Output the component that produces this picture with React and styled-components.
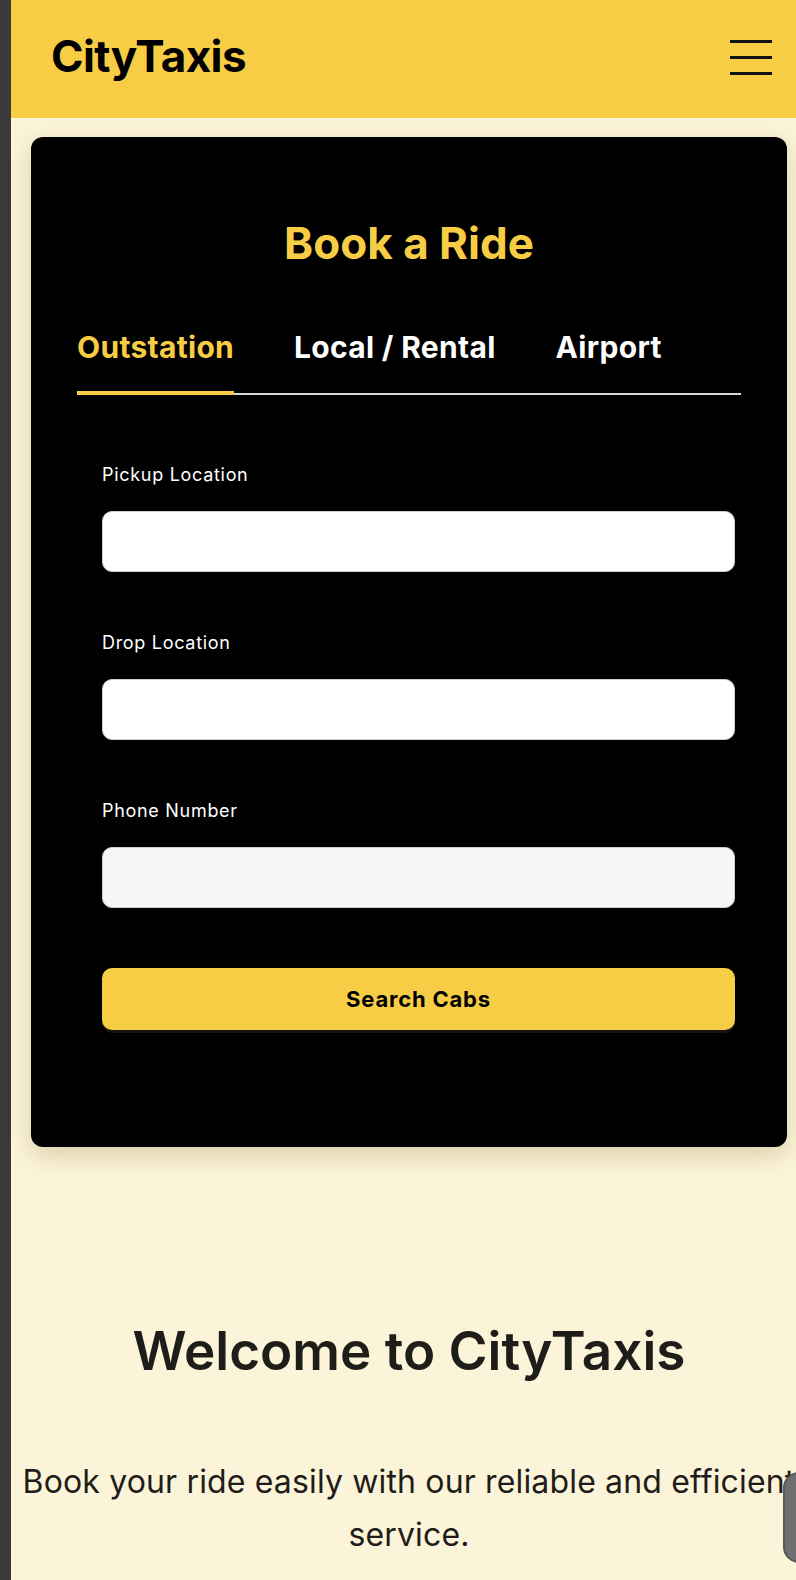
import styled, { createGlobalStyle } from 'styled-components'

const yellow = '#f8cd46'
const cream = '#fcf4d9'

const GlobalStyle = createGlobalStyle`
  html, body {
    margin: 0;
    padding: 0;
    background: ${cream};
    overflow: hidden;
  }
  * {
    box-sizing: border-box;
  }
`

const Frame = styled.div`
  display: flex;
  width: 796px;
  min-height: 1580px;
  position: relative;
  font-family: Inter, 'Noto Sans', sans-serif;
`

const Strip = styled.div`
  flex: 0 0 11px;
  background: #3a3a3a;
`

const Page = styled.div`
  flex: 0 0 796px;
  background: ${cream};
`

const Header = styled.header`
  height: 118px;
  background: ${yellow};
  display: flex;
  align-items: center;
  justify-content: space-between;
  padding: 0 35px 0 40px;
`

const Logo = styled.div`
  font-size: 44px;
  line-height: 52px;
  font-weight: 700;
  color: #000;
  letter-spacing: -0.6px;
  margin-bottom: 6px;
`

const Burger = styled.button`
  width: 42px;
  height: 35px;
  border: 0;
  padding: 0;
  background: none;
  display: flex;
  flex-direction: column;
  justify-content: space-between;
  margin-bottom: 4px;

  span {
    display: block;
    height: 3px;
    background: #111;
  }
`

const Card = styled.section`
  margin: 19px 20px 0;
  background: #000;
  border-radius: 12px;
  padding: 80px 46px 117px;
  box-shadow: 0 8px 24px rgba(120, 100, 40, 0.25);
`

const Title = styled.h2`
  margin: 0;
  text-align: center;
  color: ${yellow};
  font-size: 44px;
  line-height: 52px;
  font-weight: 700;
`

const Tabs = styled.div`
  display: flex;
  gap: 60px;
  margin-top: 60px;
  border-bottom: 2px solid #d8d8d8;
`

const Tab = styled.div`
  font-size: 30px;
  line-height: 36px;
  font-weight: 700;
  letter-spacing: 0.3px;
  padding-bottom: 26px;
  color: ${(p) => (p.$active ? yellow : '#fff')};
  border-bottom: 4px solid ${(p) => (p.$active ? yellow : 'transparent')};
  margin-bottom: -2px;
`

const Form = styled.form`
  padding: 69px 6px 0 25px;
`

const Field = styled.div`
  margin-bottom: 60px;
`

const Label = styled.label`
  display: block;
  color: #fff;
  font-size: 18px;
  line-height: 22px;
  margin-bottom: 25px;
  letter-spacing: 0.7px;
`

const Input = styled.input`
  display: block;
  width: 100%;
  height: 61px;
  border-radius: 10px;
  border: 1px solid #cfcfcf;
  background: ${(p) => (p.$muted ? '#f6f6f6' : '#fff')};
  font-size: 18px;
  padding: 0 14px;
`

const Button = styled.button`
  display: block;
  width: 100%;
  height: 62px;
  margin-top: 4px;
  border: 0;
  border-radius: 10px;
  background: ${yellow};
  color: #000;
  font-family: inherit;
  font-size: 22px;
  font-weight: 700;
  letter-spacing: 0.8px;
  box-shadow: 0 3px 0 #15140f;
`

const Welcome = styled.section`
  padding: 171px 0 0;
  text-align: center;
  color: #1f1d1a;
`

const Heading = styled.h1`
  margin: 0;
  font-size: 53px;
  line-height: 66px;
  font-weight: 600;
`

const Lead = styled.p`
  margin: 71px 0 0;
  font-size: 32px;
  line-height: 53px;
  font-weight: 400;
  letter-spacing: 0.15px;
`

const Bubble = styled.div`
  position: absolute;
  left: 783px;
  top: 1472px;
  width: 40px;
  height: 91px;
  border-radius: 16px;
  background: #6f6f6f;
  border: 2px solid #585858;
`

export default function App() {
  return (
    <Frame>
      <GlobalStyle />
      <Strip />
      <Page>
        <Header>
          <Logo>CityTaxis</Logo>
          <Burger aria-label="Menu">
            <span />
            <span />
            <span />
          </Burger>
        </Header>
        <Card>
          <Title>Book a Ride</Title>
          <Tabs>
            <Tab $active>Outstation</Tab>
            <Tab>Local / Rental</Tab>
            <Tab>Airport</Tab>
          </Tabs>
          <Form onSubmit={(e) => e.preventDefault()}>
            <Field>
              <Label>Pickup Location</Label>
              <Input type="text" />
            </Field>
            <Field>
              <Label>Drop Location</Label>
              <Input type="text" />
            </Field>
            <Field>
              <Label>Phone Number</Label>
              <Input type="tel" $muted />
            </Field>
            <Button type="submit">Search Cabs</Button>
          </Form>
        </Card>
        <Welcome>
          <Heading>Welcome to CityTaxis</Heading>
          <Lead>Book your ride easily with our reliable and efficient service.</Lead>
        </Welcome>
      </Page>
      <Bubble />
    </Frame>
  )
}
